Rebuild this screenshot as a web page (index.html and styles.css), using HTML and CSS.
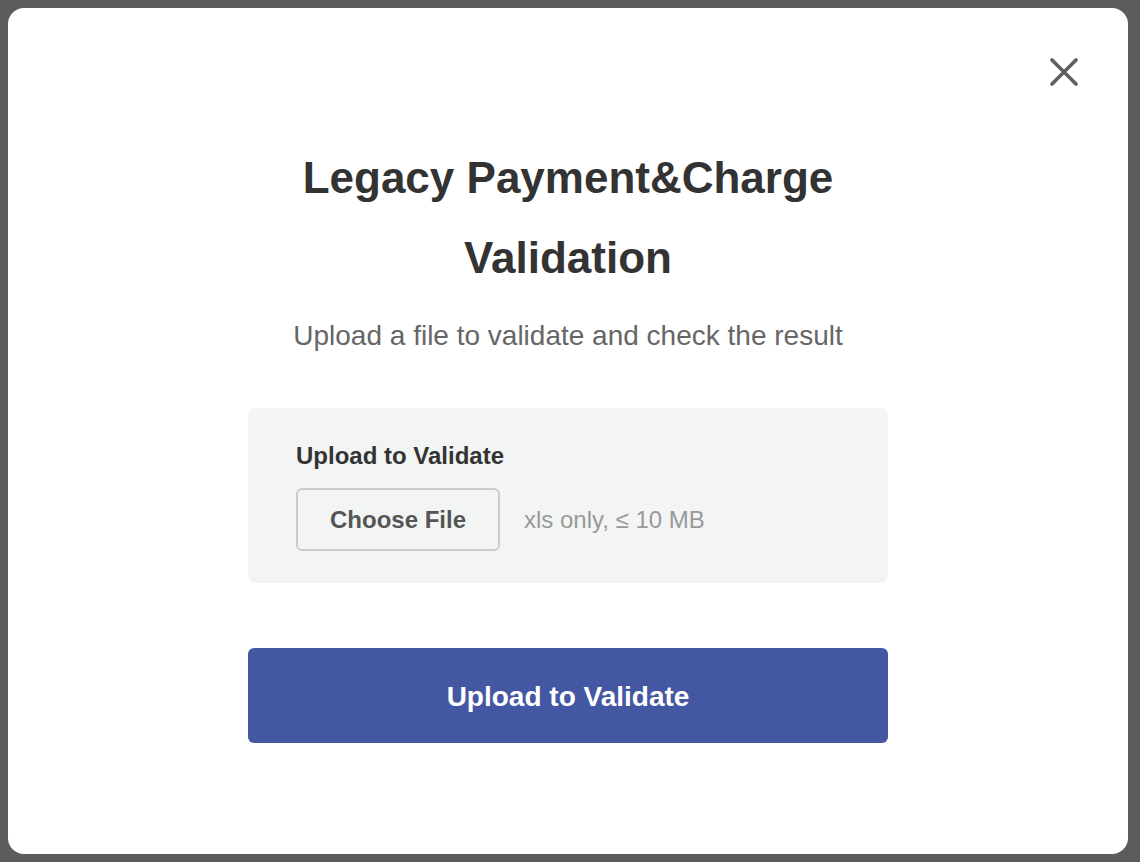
FILE: index.html
```html
<!DOCTYPE html>
<html lang="en">
<head>
<meta charset="utf-8">
<title>Legacy Payment&amp;Charge Validation</title>
<link rel="stylesheet" href="styles.css">
</head>
<body>
<div class="backdrop">
  <div class="modal">
    <button class="close" aria-label="Close">
      <svg width="28" height="28" viewBox="0 0 28 28"><path d="M2 2 L26 26 M26 2 L2 26" stroke="#5f5f5f" stroke-width="3.6" stroke-linecap="round" fill="none"/></svg>
    </button>
    <div class="content">
      <h1 class="title">Legacy Payment&amp;Charge<br>Validation</h1>
      <p class="subtitle">Upload a file to validate and check the result</p>
      <div class="upload-box">
        <div class="upload-label">Upload to Validate</div>
        <div class="file-row">
          <button class="choose">Choose File</button>
          <span class="hint">xls only, ≤ 10 MB</span>
        </div>
      </div>
      <button class="primary">Upload to Validate</button>
    </div>
  </div>
</div>
</body>
</html>
```
FILE: styles.css
```css
* { box-sizing: border-box; }
html, body { margin: 0; padding: 0; }
body {
  width: 1140px;
  height: 862px;
  background: #5c5c5c;
  font-family: "Liberation Sans", Arial, sans-serif;
}
.backdrop {
  padding: 8px 12px 8px 8px;
  height: 862px;
}
.modal {
  position: relative;
  background: #fff;
  border-radius: 16px;
  height: 846px;
  width: 1120px;
}
.close {
  position: absolute;
  top: 50px;
  right: 50px;
  width: 28px;
  height: 28px;
  padding: 0;
  border: none;
  background: none;
  display: flex;
}
.content {
  display: flex;
  flex-direction: column;
  align-items: center;
  padding-top: 130px;
}
.title {
  margin: 0;
  font-size: 44px;
  line-height: 80px;
  font-weight: 700;
  color: #333;
  text-align: center;
}
.subtitle {
  margin: 18px 0 0;
  font-size: 28px;
  line-height: 40px;
  color: #666;
}
.upload-box {
  margin-top: 52px;
  width: 640px;
  height: 175px;
  background: #f3f5f4;
  border-radius: 8px;
  padding: 33px 48px 0;
}
.upload-label {
  font-size: 24px;
  font-weight: 700;
  color: #333;
  line-height: 30px;
}
.file-row {
  display: flex;
  align-items: center;
  margin-top: 17px;
  gap: 24px;
}
.choose {
  width: 204px;
  height: 63px;
  border: 2px solid #ccc;
  border-radius: 6px;
  background: #f3f5f4;
  font-family: "Liberation Sans", Arial, sans-serif;
  font-size: 24px;
  font-weight: 700;
  color: #555;
}
.hint {
  font-size: 24px;
  color: #999;
}
.primary {
  margin-top: 65px;
  width: 640px;
  height: 95px;
  border: none;
  border-radius: 6px;
  background: #4457a2;
  color: #fff;
  font-family: "Liberation Sans", Arial, sans-serif;
  font-size: 28px;
  font-weight: 700;
  padding-top: 3px;
}
```
